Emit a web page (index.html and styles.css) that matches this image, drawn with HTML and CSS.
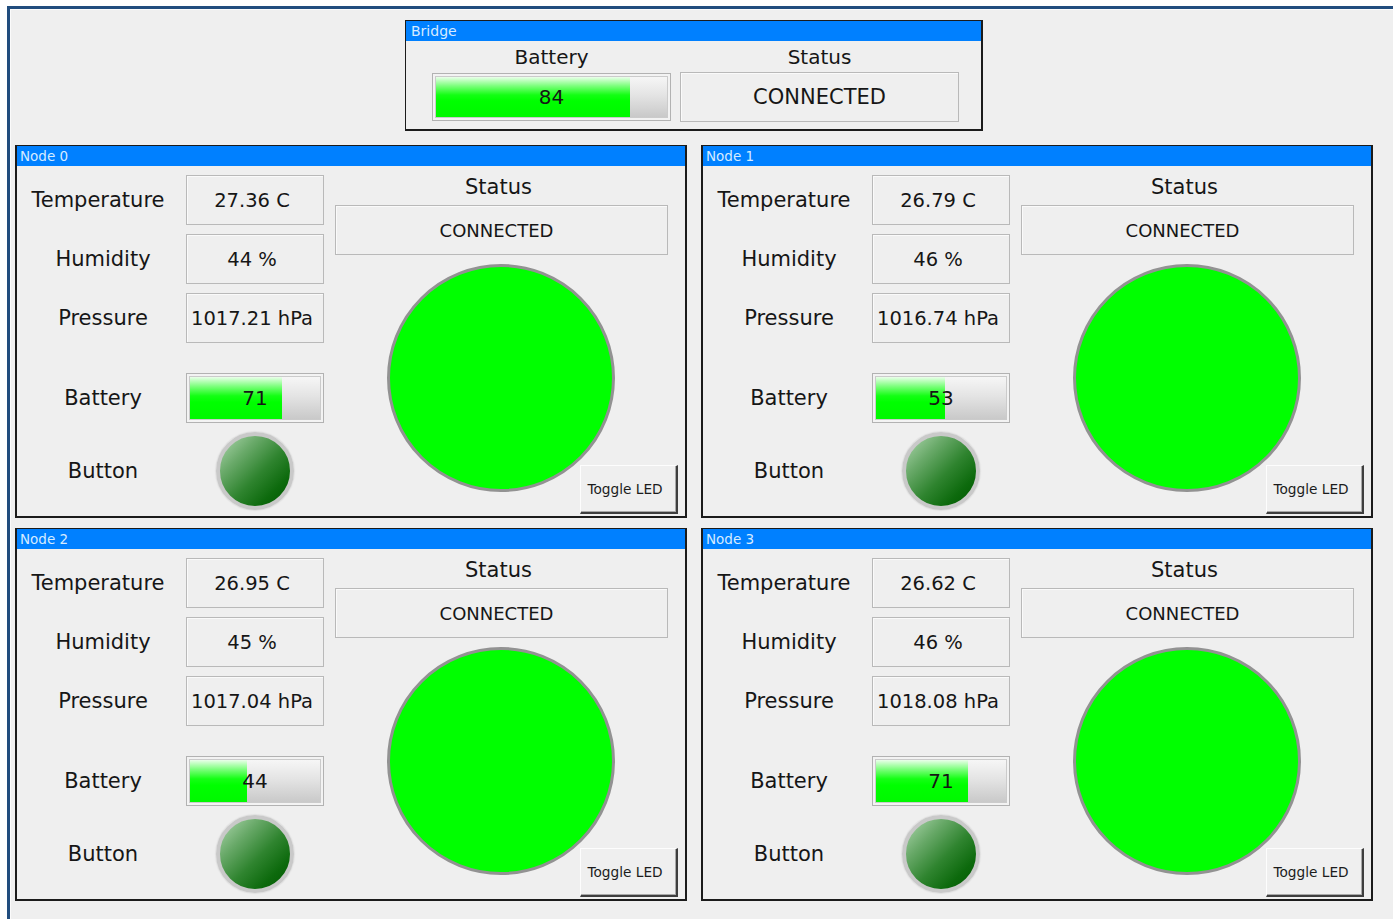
FILE: index.html
```html
<!DOCTYPE html>
<html lang="en">
<head>
<meta charset="utf-8">
<title>Sensor Dashboard</title>
<link rel="stylesheet" href="styles.css">
</head>
<body>
<div class="window">
  <div class="layout">
    <section class="bridge">
      <div class="bridge-title">Bridge</div>
      <div class="bridge-body">
        <div class="bridge-col bridge-col-battery">
          <div class="caption">Battery</div>
          <div class="bar bar-large">
            <div class="track">
              <div class="fill" style="width:84%"></div>
              <span class="bar-text">84</span>
            </div>
          </div>
        </div>
        <div class="bridge-col bridge-col-status">
          <div class="caption">Status</div>
          <div class="field field-status-large">CONNECTED</div>
        </div>
      </div>
    </section>

    <div class="nodes">
      <section class="node">
        <div class="node-title">Node 0</div>
        <div class="node-body">
          <div class="readings">
            <div class="label label-wide">Temperature</div><div class="field">27.36 C</div>
            <div class="label">Humidity</div><div class="field">44 %</div>
            <div class="label">Pressure</div><div class="field">1017.21 hPa</div>
            <div class="spacer"></div><div class="spacer"></div>
            <div class="label">Battery</div>
            <div class="bar"><div class="track"><div class="fill" style="width:71%"></div><span class="bar-text">71</span></div></div>
            <div class="label">Button</div><div class="knob-cell"><div class="knob"></div></div>
          </div>
          <div class="status-col">
            <div class="caption caption-status">Status</div>
            <div class="field field-status">CONNECTED</div>
            <div class="led-area">
              <div class="led"></div>
              <button class="toggle">Toggle LED</button>
            </div>
          </div>
        </div>
      </section>

      <section class="node">
        <div class="node-title">Node 1</div>
        <div class="node-body">
          <div class="readings">
            <div class="label label-wide">Temperature</div><div class="field">26.79 C</div>
            <div class="label">Humidity</div><div class="field">46 %</div>
            <div class="label">Pressure</div><div class="field">1016.74 hPa</div>
            <div class="spacer"></div><div class="spacer"></div>
            <div class="label">Battery</div>
            <div class="bar"><div class="track"><div class="fill" style="width:53%"></div><span class="bar-text">53</span></div></div>
            <div class="label">Button</div><div class="knob-cell"><div class="knob"></div></div>
          </div>
          <div class="status-col">
            <div class="caption caption-status">Status</div>
            <div class="field field-status">CONNECTED</div>
            <div class="led-area">
              <div class="led"></div>
              <button class="toggle">Toggle LED</button>
            </div>
          </div>
        </div>
      </section>

      <section class="node">
        <div class="node-title">Node 2</div>
        <div class="node-body">
          <div class="readings">
            <div class="label label-wide">Temperature</div><div class="field">26.95 C</div>
            <div class="label">Humidity</div><div class="field">45 %</div>
            <div class="label">Pressure</div><div class="field">1017.04 hPa</div>
            <div class="spacer"></div><div class="spacer"></div>
            <div class="label">Battery</div>
            <div class="bar"><div class="track"><div class="fill" style="width:44%"></div><span class="bar-text">44</span></div></div>
            <div class="label">Button</div><div class="knob-cell"><div class="knob"></div></div>
          </div>
          <div class="status-col">
            <div class="caption caption-status">Status</div>
            <div class="field field-status">CONNECTED</div>
            <div class="led-area">
              <div class="led"></div>
              <button class="toggle">Toggle LED</button>
            </div>
          </div>
        </div>
      </section>

      <section class="node">
        <div class="node-title">Node 3</div>
        <div class="node-body">
          <div class="readings">
            <div class="label label-wide">Temperature</div><div class="field">26.62 C</div>
            <div class="label">Humidity</div><div class="field">46 %</div>
            <div class="label">Pressure</div><div class="field">1018.08 hPa</div>
            <div class="spacer"></div><div class="spacer"></div>
            <div class="label">Battery</div>
            <div class="bar"><div class="track"><div class="fill" style="width:71%"></div><span class="bar-text">71</span></div></div>
            <div class="label">Button</div><div class="knob-cell"><div class="knob"></div></div>
          </div>
          <div class="status-col">
            <div class="caption caption-status">Status</div>
            <div class="field field-status">CONNECTED</div>
            <div class="led-area">
              <div class="led"></div>
              <button class="toggle">Toggle LED</button>
            </div>
          </div>
        </div>
      </section>
    </div>
  </div>
</div>
</body>
</html>
```

FILE: styles.css
```css
* {
  box-sizing: border-box;
}

html, body {
  margin: 0;
  padding: 0;
  background: #ffffff;
  overflow: hidden;
  width: 1393px;
  height: 919px;
}

body {
  font-family: "DejaVu Sans", "Liberation Sans", sans-serif;
  color: #161616;
}

/* application window frame; its right and bottom edges run off screen */
.window {
  margin: 6px 0 0 7px;
  width: 1400px;
  height: 930px;
  border-top: 3px solid #214d7e;
  border-left: 3px solid #214d7e;
  background: #efefef;
  box-shadow: inset 1px 1px 0 #fbfbfb;
  padding: 11px 0 0 5px;
}

.layout {
  width: 1358px;
}

/* ---------- shared read-only fields ---------- */
.field {
  border: 1px solid #b9b9b9;
  box-shadow: inset 1px 1px 0 #fafafa;
  background: #efefef;
  display: flex;
  align-items: center;
  justify-content: center;
  font-size: 19.5px;
  padding-right: 6px;
  white-space: nowrap;
}

.caption {
  font-size: 20px;
  line-height: 24px;
  height: 24px;
  text-align: center;
}

/* ---------- bridge group ---------- */
.bridge {
  width: 578px;
  height: 111px;
  margin: 0 auto;
  border: 1px solid #1b1b1b;
  border-right-width: 2px;
  border-bottom-width: 2px;
  background: #efefef;
}

.bridge-title {
  height: 20px;
  background: #0080ff;
  color: #d6ebff;
  font-size: 14px;
  line-height: 20px;
  padding-left: 5px;
}

.bridge-body {
  display: flex;
  gap: 9px;
  padding: 4px 0 0 26px;
}

.bridge-col {
  display: flex;
  flex-direction: column;
}

.bridge-col-battery {
  width: 239px;
}

.bridge-col-status {
  width: 279px;
}

.bar-large {
  margin-top: 4px;
  height: 48px;
}

.field-status-large {
  margin-top: 3px;
  height: 50px;
  font-size: 21px;
  padding-right: 0;
}

/* ---------- node groups ---------- */
.nodes {
  margin-top: 14px;
  display: grid;
  grid-template-columns: 672px 672px;
  grid-auto-rows: 373px;
  column-gap: 14px;
  row-gap: 10px;
}

.node {
  border: 2px solid #1b1b1b;
  border-top-width: 1px;
  background: #efefef;
  display: flex;
  flex-direction: column;
}

.node-title {
  height: 20px;
  background: #0080ff;
  color: #d6ebff;
  font-size: 13.5px;
  line-height: 20px;
  padding-left: 3px;
}

.node-body {
  display: flex;
  gap: 11px;
  height: 350px;
}

.readings {
  width: 307px;
  padding-top: 9px;
  display: grid;
  grid-template-columns: 169px 138px;
  grid-template-rows: 50px 50px 50px 12px 50px 78px;
  row-gap: 9px;
}

.label {
  font-size: 21px;
  display: flex;
  align-items: center;
  justify-content: center;
  padding-left: 3px;
  white-space: nowrap;
}

.label-wide {
  padding-left: 0;
  padding-right: 7px;
}

.status-col {
  width: 343px;
  padding-top: 9px;
  display: flex;
  flex-direction: column;
}

.caption-status {
  width: 333px;
  font-size: 21px;
  padding-right: 6px;
}

.field-status {
  width: 333px;
  height: 50px;
  margin-top: 6px;
  font-size: 18px;
  padding-right: 10px;
}

/* LED and its toggle share one grid cell */
.led-area {
  margin-top: 9px;
  height: 250px;
  display: grid;
}

.led {
  grid-area: 1 / 1;
  justify-self: start;
  align-self: start;
  margin-left: 52px;
  width: 228px;
  height: 228px;
  border-radius: 50%;
  background: #00ff00;
  border: 3px solid #929292;
}

.toggle {
  grid-area: 1 / 1;
  justify-self: end;
  align-self: end;
  width: 98px;
  height: 49px;
  padding: 0 7px 0 0;
  font-family: "DejaVu Sans", "Liberation Sans", sans-serif;
  font-size: 13.7px;
  color: #1c1c1c;
  background: #efefef;
  border-top: 1px solid #fdfdfd;
  border-left: 1px solid #fdfdfd;
  border-right: 2px solid #3e3e3e;
  border-bottom: 2px solid #3e3e3e;
  box-shadow: inset -1px -1px 0 #a8a8a8;
}

/* ---------- progress bars ---------- */
.bar {
  border: 1px solid #b2b2b2;
  background: #f3f3f3;
  padding: 2px;
  display: flex;
}

.track {
  flex: 1;
  display: grid;
  border: 1px solid #cbcbcb;
  background: linear-gradient(to bottom, #f6f6f6 0%, #e4e4e4 45%, #c9c9c9 100%);
}

.fill {
  grid-area: 1 / 1;
  height: 100%;
  background: linear-gradient(to bottom, #eaffea 0%, #7dff7d 22%, #14ff14 45%, #00ff00 60%, #00f800 100%);
}

.bar-text {
  grid-area: 1 / 1;
  align-self: center;
  justify-self: center;
  font-size: 20px;
  color: #151515;
}

/* ---------- push button indicator ---------- */
.knob-cell {
  display: flex;
  align-items: center;
  justify-content: center;
}

.knob {
  width: 78px;
  height: 78px;
  border-radius: 50%;
  border: 4px solid #c9c9c9;
  box-shadow: 0 0 1px 1px #e0e0e0;
  background: linear-gradient(135deg, #b0d8b0 0%, #6aaa6a 28%, #2f842f 55%, #0d6a0d 78%, #005700 100%);
}
```
